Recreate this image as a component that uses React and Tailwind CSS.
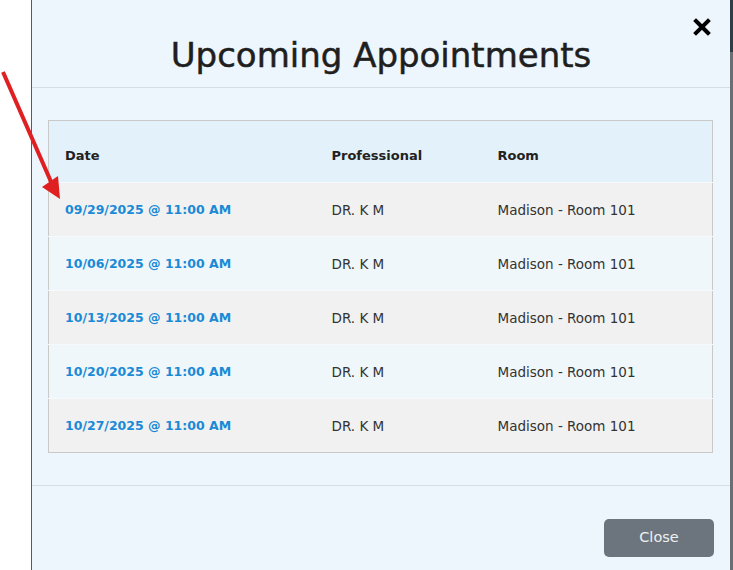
import React from 'react';

const appointments = [
  { date: '09/29/2025 @ 11:00 AM', pro: 'DR. K M', room: 'Madison - Room 101' },
  { date: '10/06/2025 @ 11:00 AM', pro: 'DR. K M', room: 'Madison - Room 101' },
  { date: '10/13/2025 @ 11:00 AM', pro: 'DR. K M', room: 'Madison - Room 101' },
  { date: '10/20/2025 @ 11:00 AM', pro: 'DR. K M', room: 'Madison - Room 101' },
  { date: '10/27/2025 @ 11:00 AM', pro: 'DR. K M', room: 'Madison - Room 101' },
];

export default function App() {
  return (
    <div className="relative flex h-[570px] w-[733px] overflow-hidden bg-white font-['DejaVu_Sans',sans-serif] text-[#212529]">
      {/* left gutter of the page */}
      <div className="w-[31px] shrink-0 bg-white" />

      {/* Modal */}
      <div className="flex w-[699px] shrink-0 flex-col border-l border-[#5b5b5b] bg-[#eef6fd]">
        {/* Header */}
        <div className="relative flex h-[88px] shrink-0 items-center justify-center border-b border-[#d6dde4] pt-[24px]">
          <h2 className="text-[34px] font-normal text-[#1f1f1f] [-webkit-text-stroke:0.5px_#1f1f1f]">Upcoming Appointments</h2>
          <button className="absolute right-[19px] top-[18px] h-[18px] w-[18px]">
            <svg viewBox="0 0 18 18" className="h-[18px] w-[18px]">
              <path d="M3 3 L15 15 M15 3 L3 15" stroke="#000" strokeWidth="4" strokeLinecap="square" />
            </svg>
          </button>
        </div>

        {/* Body */}
        <div className="border-b border-[#d6dde4] px-[16px] pb-[32px] pt-[32px]">
          <table className="w-[665px] table-fixed border-collapse border border-[#c9c9c9]">
            <colgroup>
              <col className="w-[267px]" />
              <col className="w-[166px]" />
              <col />
            </colgroup>
            <thead>
              <tr className="h-[62px] bg-[#e3f1fb] text-[13px]">
                <th className="pl-[16px] pt-[8px] text-left font-bold text-[#222]">Date</th>
                <th className="pl-[16px] pt-[8px] text-left font-bold text-[#222]">Professional</th>
                <th className="pl-[16px] pt-[8px] text-left font-bold text-[#222]">Room</th>
              </tr>
            </thead>
            <tbody>
              {appointments.map((a, i) => (
                <tr
                  key={a.date}
                  className={`h-[54px] border-t border-[#f7fafc] ${i % 2 === 0 ? 'bg-[#f1f1f1]' : 'bg-[#f0f7fb]'}`}
                >
                  <td className="pl-[16px] pt-[1px] text-[12.5px] font-bold text-[#1a8ad6]">{a.date}</td>
                  <td className="pl-[16px] pt-[1px] text-[13.5px] text-[#333]">{a.pro}</td>
                  <td className="pl-[16px] pt-[1px] text-[13.5px] text-[#333]">{a.room}</td>
                </tr>
              ))}
            </tbody>
          </table>
        </div>

        {/* Footer */}
        <div className="flex justify-end px-[16px] pt-[33px]">
          <button className="h-[38px] w-[110px] rounded-[5px] bg-[#6c757d] text-[14.5px] text-[#eef0f2]">Close</button>
        </div>
      </div>

      {/* dimmed page peeking at the right */}
      <div className="flex w-[3px] shrink-0 flex-col">
        <div className="h-[52px] bg-[#2c3e46]" />
        <div className="flex-1 bg-[#6a6f73]" />
      </div>

      {/* red annotation arrow */}
      <svg className="pointer-events-none absolute left-0 top-0" width="80" height="210" viewBox="0 0 80 210">
        <line x1="3" y1="72" x2="52" y2="184" stroke="#e02020" strokeWidth="4" />
        <polygon points="42,187 58,176 60,199" fill="#e02020" />
      </svg>
    </div>
  );
}
